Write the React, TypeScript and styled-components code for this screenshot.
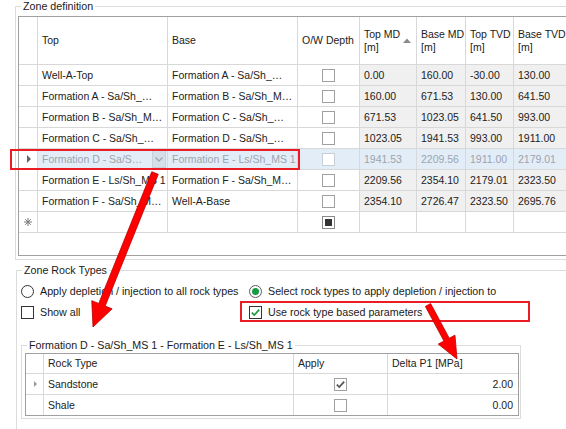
import React from "react";
import styled, { createGlobalStyle } from "styled-components";

const GlobalStyle = createGlobalStyle`
  html, body {
    margin: 0;
    padding: 0;
    background: #ffffff;
  }
  body {
    font-family: "Liberation Sans", Arial, sans-serif;
    color: #1e1e1e;
  }
`;

type Tone = "plain" | "readonly" | "selected";

type ZoneRow = {
  top: string;
  base: string;
  values: string[];
  selected?: boolean;
};

const ZONES: ZoneRow[] = [
  { top: "Well-A-Top", base: "Formation A - Sa/Sh_…", values: ["0.00", "160.00", "-30.00", "130.00"] },
  { top: "Formation A - Sa/Sh_…", base: "Formation B - Sa/Sh_M…", values: ["160.00", "671.53", "130.00", "641.50"] },
  { top: "Formation B - Sa/Sh_M…", base: "Formation C - Sa/Sh_…", values: ["671.53", "1023.05", "641.50", "993.00"] },
  { top: "Formation C - Sa/Sh_…", base: "Formation D - Sa/Sh_…", values: ["1023.05", "1941.53", "993.00", "1911.00"] },
  {
    top: "Formation D - Sa/S…",
    base: "Formation E - Ls/Sh_MS 1",
    values: ["1941.53", "2209.56", "1911.00", "2179.01"],
    selected: true,
  },
  { top: "Formation E - Ls/Sh_MS 1", base: "Formation F - Sa/Sh_M…", values: ["2209.56", "2354.10", "2179.01", "2323.50"] },
  { top: "Formation F - Sa/Sh_M…", base: "Well-A-Base", values: ["2354.10", "2726.47", "2323.50", "2695.76"] },
];

const ROCKS = [
  { name: "Sandstone", apply: true, delta: "2.00", current: true },
  { name: "Shale", apply: false, delta: "0.00", current: false },
];

const cellBg: Record<Tone, string> = {
  plain: "#ffffff",
  readonly: "#f0f0f0",
  selected: "#e3edf8",
};

const Screen = styled.div`
  position: relative;
  width: 566px;
  height: 429px;
  overflow: hidden;
  background: #ffffff;
`;

const GroupBox = styled.fieldset<{ $indent: number; $gap: number; $width: number; $pad: string }>`
  box-sizing: border-box;
  width: ${(p) => p.$width}px;
  min-width: 0;
  margin: ${(p) => p.$gap}px 0 0 ${(p) => p.$indent}px;
  padding: ${(p) => p.$pad};
  border: 1px solid #dcdcdc;
`;

const Caption = styled.legend<{ $offset: number }>`
  margin-left: ${(p) => p.$offset}px;
  padding: 0 2px;
  font-size: 10.7px;
  line-height: 13px;
  color: #1a1a1a;
  white-space: nowrap;
`;

const GridFrame = styled.div<{ $width: number; $height: number }>`
  box-sizing: border-box;
  width: ${(p) => p.$width}px;
  height: ${(p) => p.$height}px;
  border: 1px solid #a0a0a0;
  background: #ffffff;
  overflow: hidden;
`;

const GridBody = styled.div<{ $cols: string; $head: number; $closed?: boolean }>`
  display: grid;
  grid-template-columns: ${(p) => p.$cols};
  grid-template-rows: ${(p) => p.$head}px;
  grid-auto-rows: 20px;
  gap: 1px;
  background: #d8d8d8;
  border-bottom: ${(p) => (p.$closed ? "1px solid #d8d8d8" : "none")};
  font-size: 10.5px;
`;

const HeadCell = styled.div<{ $sort?: boolean }>`
  display: flex;
  align-items: center;
  justify-content: space-between;
  padding: 0 ${(p) => (p.$sort ? "5px" : "0")} 0 4px;
  background: #ffffff;
  color: #222222;
  line-height: 13px;
  white-space: nowrap;
  overflow: hidden;
`;

const Cell = styled.div<{ $tone?: Tone; $align?: "start" | "center" | "end" }>`
  display: flex;
  align-items: center;
  justify-content: ${(p) =>
    p.$align === "center" ? "center" : p.$align === "end" ? "flex-end" : "flex-start"};
  padding: 0 ${(p) => (p.$align === "end" ? "5px" : "0")} 0
    ${(p) => (!p.$align || p.$align === "start" ? "4px" : "0")};
  background: ${(p) => cellBg[p.$tone ?? "plain"]};
  color: ${(p) => (p.$tone === "selected" ? "#9ba4ae" : "#222222")};
  white-space: nowrap;
  overflow: hidden;
  min-width: 0;
`;

const EditCell = styled(Cell)`
  padding-right: 1px;
  gap: 2px;
`;

const EditText = styled.span`
  flex: 1;
  overflow: hidden;
`;

const DropButton = styled.span`
  box-sizing: border-box;
  flex: none;
  width: 14px;
  height: 18px;
  display: flex;
  align-items: center;
  justify-content: center;
  background: #d5dfe9;
  border: 1px solid #c6d1dc;
`;

const RowMark = styled.div`
  display: flex;
  align-items: center;
  justify-content: center;
  background: #ffffff;
`;

const Pointer = styled.span<{ $color: string; $size: number }>`
  width: 0;
  height: 0;
  border-left: ${(p) => p.$size}px solid ${(p) => p.$color};
  border-top: ${(p) => p.$size}px solid transparent;
  border-bottom: ${(p) => p.$size}px solid transparent;
  margin-left: 1px;
`;

const Box = styled.span<{ $border: string }>`
  box-sizing: border-box;
  flex: none;
  width: 13px;
  height: 13px;
  display: inline-flex;
  align-items: center;
  justify-content: center;
  border: 1px solid ${(p) => p.$border};
  background: #ffffff;
`;

const Filled = styled.span`
  width: 7px;
  height: 7px;
  background: #333333;
`;

const Radio = styled.span<{ $on?: boolean }>`
  box-sizing: border-box;
  flex: none;
  width: 13px;
  height: 13px;
  border-radius: 50%;
  border: 1px solid ${(p) => (p.$on ? "#5a5a5a" : "#333333")};
  background: #ffffff;
  display: inline-flex;
  align-items: center;
  justify-content: center;
  &::after {
    content: "";
    width: 7px;
    height: 7px;
    border-radius: 50%;
    background: ${(p) => (p.$on ? "#169a44" : "transparent")};
  }
`;

const Options = styled.div`
  display: grid;
  grid-template-columns: 228px auto;
  grid-auto-rows: 16px;
  row-gap: 5px;
`;

const Option = styled.label`
  display: flex;
  align-items: center;
  gap: 6px;
  font-size: 10.7px;
  color: #1a1a1a;
  white-space: nowrap;
`;

const Highlight = styled.div<{ $x: number; $y: number; $w: number; $h: number }>`
  position: absolute;
  left: ${(p) => p.$x}px;
  top: ${(p) => p.$y}px;
  width: ${(p) => p.$w}px;
  height: ${(p) => p.$h}px;
  box-sizing: border-box;
  border: 2px solid #ec1c24;
  pointer-events: none;
`;

const Overlay = styled.svg`
  position: absolute;
  left: 0;
  top: 0;
  pointer-events: none;
`;

const Check = ({ color }: { color: string }) => (
  <svg width="11" height="11" viewBox="0 0 11 11">
    <polyline points="1.8,5.6 4.3,8.1 9.2,2.6" fill="none" stroke={color} strokeWidth="1.7" />
  </svg>
);

const SortUp = () => (
  <svg width="8" height="5" viewBox="0 0 8 5">
    <polygon points="0,5 4,0.5 8,5" fill="#8a8a8a" />
  </svg>
);

const Chevron = () => (
  <svg width="8" height="5" viewBox="0 0 8 5">
    <polyline points="0.5,0.5 4,4 7.5,0.5" fill="none" stroke="#9aa6b2" strokeWidth="1.3" />
  </svg>
);

const NewRowStar = () => (
  <svg width="8" height="8" viewBox="0 0 8 8">
    <g stroke="#7a7a7a" strokeWidth="1">
      <line x1="4" y1="0" x2="4" y2="8" />
      <line x1="0" y1="4" x2="8" y2="4" />
      <line x1="1.2" y1="1.2" x2="6.8" y2="6.8" />
      <line x1="6.8" y1="1.2" x2="1.2" y2="6.8" />
    </g>
  </svg>
);

const ZoneGrid = () => (
  <GridFrame $width={600} $height={240}>
    <GridBody $cols="18px 129px 129px 61px 56px 48px 47px 80px" $head={47} $closed>
      <HeadCell />
      <HeadCell>Top</HeadCell>
      <HeadCell>Base</HeadCell>
      <HeadCell>O/W Depth</HeadCell>
      <HeadCell $sort>
        <span>
          Top MD
          <br />
          [m]
        </span>
        <SortUp />
      </HeadCell>
      <HeadCell>
        <span>
          Base MD
          <br />
          [m]
        </span>
      </HeadCell>
      <HeadCell>
        <span>
          Top TVD
          <br />
          [m]
        </span>
      </HeadCell>
      <HeadCell>
        <span>
          Base TVD
          <br />
          [m]
        </span>
      </HeadCell>

      {ZONES.map((z) => {
        const tone: Tone = z.selected ? "selected" : "plain";
        const numTone: Tone = z.selected ? "selected" : "readonly";
        return (
          <React.Fragment key={z.top + z.base}>
            <RowMark>{z.selected && <Pointer $color="#666666" $size={4} />}</RowMark>
            {z.selected ? (
              <EditCell $tone={tone}>
                <EditText>{z.top}</EditText>
                <DropButton>
                  <Chevron />
                </DropButton>
              </EditCell>
            ) : (
              <Cell $tone={tone}>{z.top}</Cell>
            )}
            <Cell $tone={tone}>{z.base}</Cell>
            <Cell $tone={tone} $align="center">
              <Box $border={z.selected ? "#c9cfd6" : "#a0a0a0"} />
            </Cell>
            {z.values.map((v, i) => (
              <Cell key={i} $tone={numTone}>
                {v}
              </Cell>
            ))}
          </React.Fragment>
        );
      })}

      <RowMark>
        <NewRowStar />
      </RowMark>
      <Cell />
      <Cell />
      <Cell $align="center">
        <Box $border="#8a8a8a">
          <Filled />
        </Box>
      </Cell>
      <Cell />
      <Cell />
      <Cell />
      <Cell />
    </GridBody>
  </GridFrame>
);

const RockGrid = () => (
  <GridFrame $width={494} $height={63}>
    <GridBody $cols="17px 249px 93px 130px" $head={19}>
      <HeadCell />
      <HeadCell>Rock Type</HeadCell>
      <HeadCell>Apply</HeadCell>
      <HeadCell>Delta P1 [MPa]</HeadCell>
      {ROCKS.map((r) => (
        <React.Fragment key={r.name}>
          <RowMark>{r.current && <Pointer $color="#9a9a9a" $size={3} />}</RowMark>
          <Cell>{r.name}</Cell>
          <Cell $align="center">
            <Box $border="#a0a0a0">{r.apply && <Check color="#555555" />}</Box>
          </Cell>
          <Cell $align="end">{r.delta}</Cell>
        </React.Fragment>
      ))}
    </GridBody>
  </GridFrame>
);

const Arrows = () => (
  <Overlay width="566" height="429" viewBox="0 0 566 429">
    <polygon
      points="158.25,174.31 105.21,306.05 112.16,308.85 93,327 91.76,300.63 98.71,303.43 151.75,171.69"
      fill="#ff0000"
      stroke="#b80000"
      strokeWidth="0.8"
    />
    <polygon
      points="430.64,303.58 449.23,338.2 454.96,335.13 457,359 438.22,344.11 443.95,341.04 425.36,306.42"
      fill="#ff0000"
      stroke="#b80000"
      strokeWidth="0.8"
    />
  </Overlay>
);

export default function App() {
  return (
    <>
      <GlobalStyle />
      <Screen>
        <GroupBox $indent={15} $gap={0} $width={620} $pad="3px 0 3px 2px">
          <Caption $offset={3}>Zone definition</Caption>
          <ZoneGrid />
        </GroupBox>

        <GroupBox $indent={16} $gap={4} $width={620} $pad="6px 0 30px 4px">
          <Caption $offset={1}>Zone Rock Types</Caption>
          <Options>
            <Option>
              <Radio />
              Apply depletion / injection to all rock types
            </Option>
            <Option>
              <Radio $on />
              Select rock types to apply depletion / injection to
            </Option>
            <Option>
              <Box $border="#333333" />
              Show all
            </Option>
            <Option>
              <Box $border="#333333">
                <Check color="#1a9a44" />
              </Box>
              Use rock type based parameters
            </Option>
          </Options>

          <GroupBox $indent={0} $gap={19} $width={500} $pad="1px 1px 2px 3px">
            <Caption $offset={2}>Formation D - Sa/Sh_MS 1 - Formation E - Ls/Sh_MS 1</Caption>
            <RockGrid />
          </GroupBox>
        </GroupBox>

        <Highlight $x={10} $y={149} $w={290} $h={21} />
        <Highlight $x={240} $y={301} $w={290} $h={21} />
        <Arrows />
      </Screen>
    </>
  );
}
